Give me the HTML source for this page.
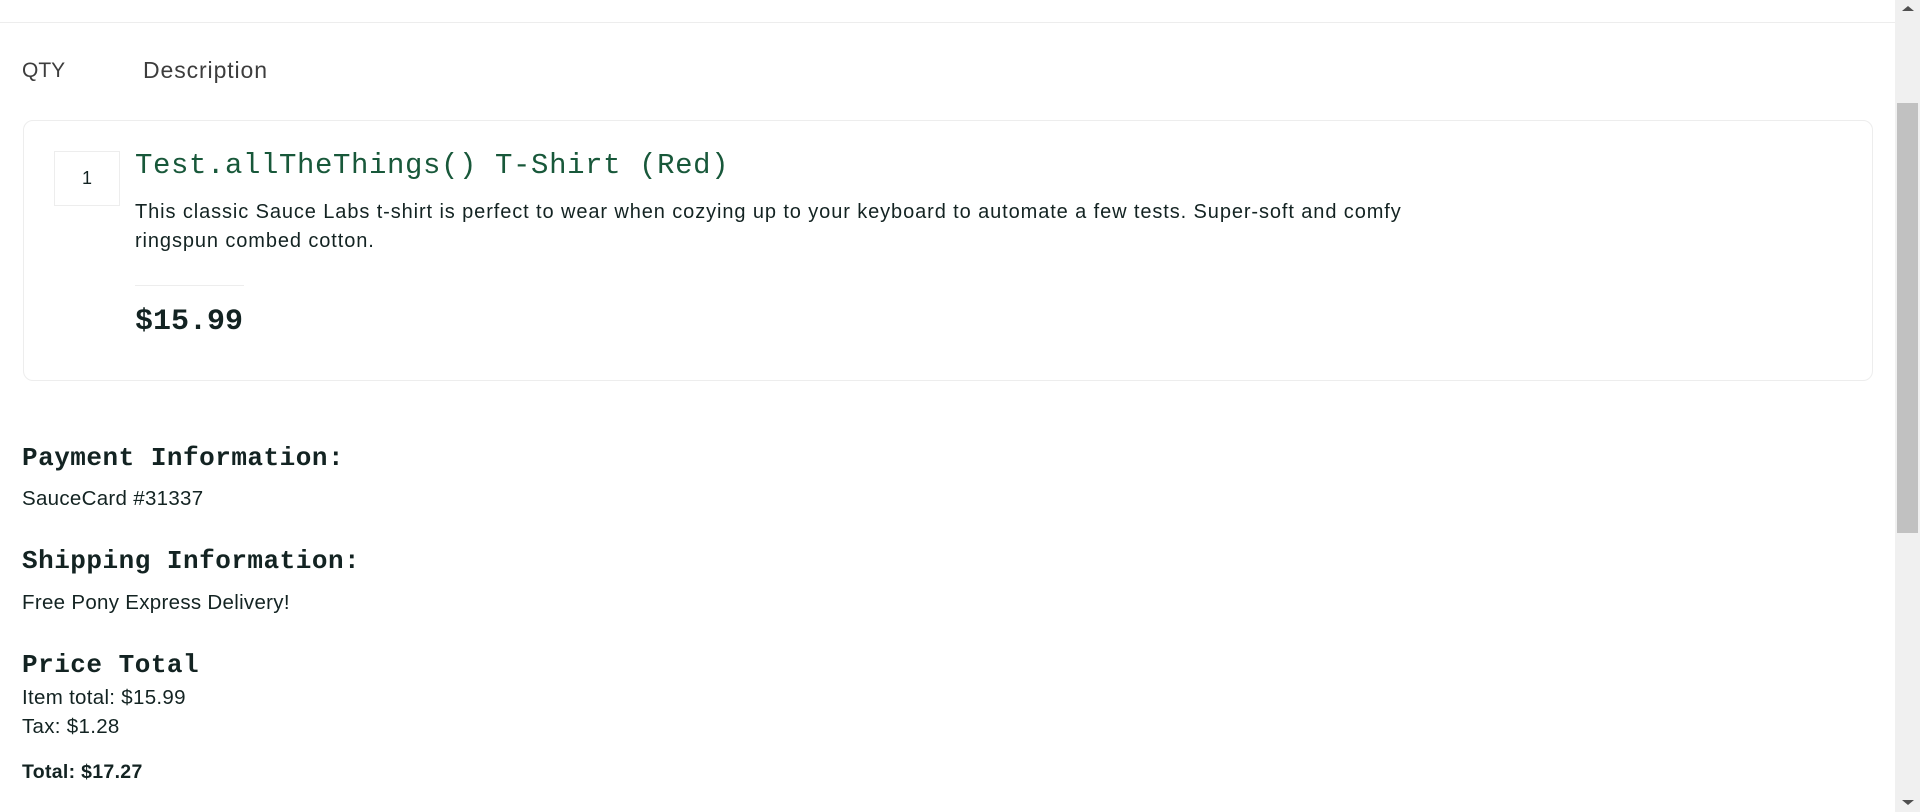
<!DOCTYPE html>
<html><head><meta charset="utf-8"><style>
html,body{margin:0;padding:0;width:1920px;height:812px;overflow:hidden;background:#fff;font-family:"Liberation Sans",sans-serif;color:#132322}
.a{position:absolute;white-space:nowrap}
.mono{font-family:"Liberation Mono",monospace}
.b{font-size:20.5px;letter-spacing:0.3px}
</style></head><body>
<div class="a" style="left:0;top:22px;width:1895px;height:1px;background:#ededed"></div>
<div class="a" style="left:22px;top:59px;font-size:21px;color:#3d3d3d">QTY</div>
<div class="a" style="left:143px;top:57px;font-size:23px;letter-spacing:0.9px;color:#3d3d3d">Description</div>
<div class="a" style="left:23px;top:120px;width:1848px;height:259px;border:1px solid #ededed;border-radius:10px"></div>
<div class="a" style="left:54px;top:151px;width:64px;height:53px;border:1px solid #ededed;text-align:center;line-height:53px;font-size:18px">1</div>
<div class="a mono" style="left:135px;top:149px;font-size:29px;color:#18583a;letter-spacing:0.6px">Test.allTheThings() T-Shirt (Red)</div>
<div class="a" style="left:135px;top:198px;font-size:20px;letter-spacing:0.9px;line-height:29px">This classic Sauce Labs t-shirt is perfect to wear when cozying up to your keyboard to automate a few tests. Super-soft and comfy<br>ringspun combed cotton.</div>
<div class="a" style="left:135px;top:285px;width:109px;height:1px;background:#ededed"></div>
<div class="a mono" style="left:135px;top:305px;font-size:30px;font-weight:bold">$15.99</div>
<div class="a mono" style="left:22px;top:443px;font-size:26px;font-weight:bold;letter-spacing:0.5px">Payment Information:</div>
<div class="a b" style="left:22px;top:487px">SauceCard #31337</div>
<div class="a mono" style="left:22px;top:546px;font-size:26px;font-weight:bold;letter-spacing:0.5px">Shipping Information:</div>
<div class="a b" style="left:22px;top:591px">Free Pony Express Delivery!</div>
<div class="a mono" style="left:22px;top:650px;font-size:26px;font-weight:bold;letter-spacing:0.5px">Price Total</div>
<div class="a b" style="left:22px;top:686px">Item total: $15.99</div>
<div class="a b" style="left:22px;top:715px">Tax: $1.28</div>
<div class="a b" style="left:22px;top:761px;font-weight:bold;font-size:19.5px">Total: $17.27</div>
<div class="a" style="left:1895px;top:0;width:25px;height:812px;background:#f0f0f0"></div>
<div class="a" style="left:1897px;top:103px;width:21px;height:430px;background:#c1c1c1"></div>
<div class="a" style="left:1902px;top:6px;width:0;height:0;border-left:6px solid transparent;border-right:6px solid transparent;border-bottom:5px solid #505050"></div>
<div class="a" style="left:1902px;top:800px;width:0;height:0;border-left:6px solid transparent;border-right:6px solid transparent;border-top:5px solid #505050"></div>
</body></html>
